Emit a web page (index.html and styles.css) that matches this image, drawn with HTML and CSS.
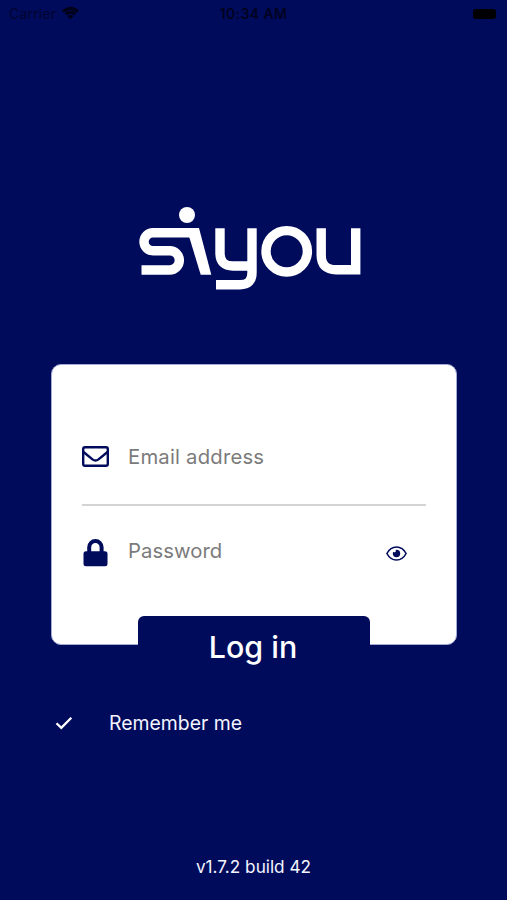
FILE: index.html
```html
<!DOCTYPE html>
<html lang="en">
<head>
<meta charset="utf-8">
<meta name="viewport" content="width=device-width">
<title>Siyou</title>
<link rel="stylesheet" href="styles.css">
</head>
<body>
<header class="status">
  <span class="carrier">Carrier
    <svg width="19" height="14" viewBox="0 0 19 14"><path d="M.8 4.500Q9.500-3.200 18.200 4.500L16 6.700Q9.500 1.300 3 6.700ZM3.600 7.300Q9.500 2.400 15.400 7.300L13.200 9.500Q9.500 6.600 5.800 9.500ZM6.400 10.200Q9.500 7.800 12.600 10.200L9.500 13.300Z"/></svg>
  </span>
  <span class="time">10:34 AM</span>
  <span class="battery"></span>
</header>
<main>
  <svg class="logo" width="224" height="86" viewBox="138 205 224 86" role="img" aria-label="siyou">
    <circle class="solid" cx="187" cy="215" r="8"/>
    <path class="solid" d="M190 228H199L211.300 274.700H200.700L189.300 237.300Z"/>
    <path d="M192 232.700H153A9 9 0 0 0 153 250.700H169.700A9.650 9.650 0 0 1 169.700 270H141.500"/>
    <path d="M220 228.300V253Q220 266 233 266H252M252 228.300V272.700Q252 284.700 240 284.700H216"/>
    <circle cx="286.700" cy="251.300" r="20.700"/>
    <path d="M321.200 228.300V255Q321.200 269.700 336 269.700H355.700V228.300"/>
  </svg>
  <form class="card">
    <label class="field">
      <svg class="icon" width="27" height="21" viewBox="0 0 27 21"><rect x="1.200" y="1.200" width="24.600" height="18.600" rx="1.800"/><path d="M1.500 6L10.500 13.400Q13.500 15.600 16.500 13.400L25.500 6"/></svg>
      <input type="text" placeholder="Email address">
    </label>
    <label class="field password">
      <svg class="icon lock" width="27" height="28" viewBox="0 0 27 28"><path class="shackle" d="M7.200 13V8.300A6.200 6.200 0 0 1 19.600 8.300V13"/><rect class="body" x="1.500" y="12.300" width="24" height="14.900" rx="2.500"/></svg>
      <input type="text" placeholder="Password">
      <svg class="eye" width="21" height="15" viewBox="0 0 21 15"><path d="M.9 7.500Q4.300 1 10.500 1T20.100 7.500Q16.700 14 10.500 14T.9 7.500Z"/><path class="pupil" d="M10.500 3.800A3.700 3.700 0 1 1 6.800 7.500Q6.800 6.500 7.300 5.700Q8.200 6.800 9.400 6.100Q10.400 5.200 9.500 4Z"/></svg>
    </label>
    <button class="login" type="button">Log in</button>
  </form>
  <div class="remember">
    <svg width="18" height="14" viewBox="0 0 18 14"><path d="M1.500 7.200L6.300 11.900L16.300 1.800"/></svg>
    <span>Remember me</span>
  </div>
</main>
<footer>v1.7.2 build 42</footer>
</body>
</html>
```
FILE: styles.css
```css
* { box-sizing: border-box; }
html { background: #000b5c; }
body {
  margin: 0;
  height: 900px;
  display: flex;
  flex-direction: column;
  overflow: hidden;
  background: #000b5c;
  color: #f4f5ff;
  font-family: Inter, "Liberation Sans", sans-serif;
}
svg { display: block; flex: none; }
.status {
  height: 27px;
  padding: 0 11px 0 9px;
  display: grid;
  grid-template-columns: 1fr auto 1fr;
  align-items: center;
  color: #00031f;
  font-size: 14px;
}
.carrier { display: flex; align-items: center; gap: 5px; letter-spacing: .2px; color: #000430; }
.carrier svg { fill: #00021a; margin-top: -2px; }
.time { padding-left: 2px; font-weight: 600; font-size: 14px; letter-spacing: .4px; }
.battery { justify-self: end; width: 23px; height: 10px; border-radius: 3px; background: #000; }
main { flex: 1; padding: 178px 51px 0; }
.logo { margin: 0 0 0 87px; fill: none; stroke: #fff; stroke-width: 9.400; }
.logo .solid { fill: #fff; stroke: none; }
.card {
  width: 405.500px;
  height: 281.500px;
  margin-top: 72.500px;
  padding: 45px 29px 0 30px;
  border: 1px solid #a5aad5;
  border-radius: 10px;
  background: #fff;
}
.field { width: 344px; height: 96px; display: flex; align-items: center; gap: 19px; border-bottom: 2px solid #d3d3d3; }
.field:first-child { padding-bottom: 1px; }
.password { border: 0; height: 95px; padding: 0 19px 0 0; }
.password input { padding-bottom: 5px; }
.icon { fill: none; stroke: #000b5c; stroke-width: 2.400; }
.lock .shackle { stroke-width: 4; }
.lock .body { fill: #000b5c; stroke: none; }
.eye { fill: none; stroke: #000b5c; stroke-width: 1.600; }
.eye .pupil { fill: #000b5c; stroke: none; }
input {
  flex: 1;
  min-width: 0;
  padding: 0;
  border: 0;
  outline: 0;
  background: none;
  color: #000b5c;
  font: 20.300px Inter, sans-serif;
  letter-spacing: .2px;
}
input::placeholder { color: #7b7b7b; opacity: 1; }
.password input { letter-spacing: .05px; }
.login {
  display: block;
  width: 232px;
  height: 62px;
  margin: 15px 0 0 56px;
  padding: 0 2px 0 0;
  border: 0;
  border-radius: 6px;
  background: #000b5c;
  color: #fff;
  font: 500 30.400px Inter, sans-serif;
}
.remember { display: flex; align-items: center; gap: 36px; height: 28px; margin: 64px 0 0 4px; font-size: 19.400px; }
.remember svg { fill: none; stroke: #fff; stroke-width: 2.300; }
footer { height: 66px; padding-top: 22px; text-align: center; font-size: 17.200px; line-height: 22px; }
```
